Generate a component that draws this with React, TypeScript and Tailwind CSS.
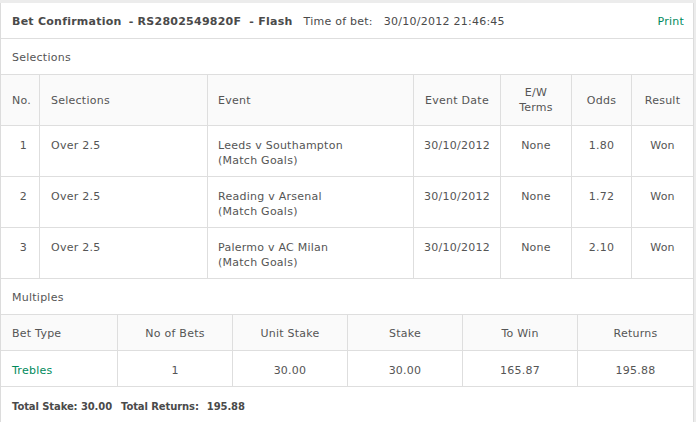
import React from "react";

type Sel = { no: number; selection: string; event: string; market: string; date: string; ew: string; odds: string; result: string };

const SELECTIONS: Sel[] = [
  { no: 1, selection: "Over 2.5", event: "Leeds v Southampton", market: "(Match Goals)", date: "30/10/2012", ew: "None", odds: "1.80", result: "Won" },
  { no: 2, selection: "Over 2.5", event: "Reading v Arsenal", market: "(Match Goals)", date: "30/10/2012", ew: "None", odds: "1.72", result: "Won" },
  { no: 3, selection: "Over 2.5", event: "Palermo v AC Milan", market: "(Match Goals)", date: "30/10/2012", ew: "None", odds: "2.10", result: "Won" },
];

const selCols = "grid grid-cols-[39px_168px_206px_87px_71px_60px_61px]";
const multiCols = "grid grid-cols-[117px_115px_115px_115px_115px_115px]";
const cell = "border-r border-[#dedede] last:border-r-0";

export default function App() {
  return (
    <div
      className="w-[696px] h-[422px] overflow-hidden bg-[#ececec] pt-[3px] text-[11px] leading-[15px] tracking-[0.25px] text-[#555]"
      style={{ fontFamily: '"DejaVu Sans", Verdana, sans-serif' }}
    >
      <div className="w-[694px] h-[440px] bg-white border-l border-r border-[#dcdcdc]">
        {/* Title */}
        <div className="h-[36px] flex items-center justify-between pt-[2px] pl-[11px] pr-[9px] border-b border-[#dedede]">
          <div className="flex items-center whitespace-pre text-[#4a4a4a]">
            <span className="font-bold">Bet Confirmation</span>
            <span className="font-bold ml-[7px]">- RS2802549820F</span>
            <span className="font-bold ml-[8px]">- Flash</span>
            <span className="ml-[11px]">Time of bet:</span>
            <span className="ml-[11px]">30/10/2012 21:46:45</span>
          </div>
          <span className="text-[#008a5c]">Print</span>
        </div>

        {/* Selections label */}
        <div className="h-[36px] flex items-center pt-[2px] pl-[11px] border-b border-[#dedede]">Selections</div>

        {/* Selections table */}
        <div className={`${selCols} h-[51px] bg-[#fafafa] border-b border-[#dedede]`}>
          <div className={`${cell} flex items-center pl-[11px]`}>No.</div>
          <div className={`${cell} flex items-center pl-[11px]`}>Selections</div>
          <div className={`${cell} flex items-center pl-[10px]`}>Event</div>
          <div className={`${cell} flex items-center justify-center`}>Event Date</div>
          <div className={`${cell} flex items-center justify-center text-center`}>
            E/W
            <br />
            Terms
          </div>
          <div className={`${cell} flex items-center justify-center`}>Odds</div>
          <div className={`${cell} flex items-center justify-center`}>Result</div>
        </div>
        {SELECTIONS.map((s) => (
          <div key={s.no} className={`${selCols} h-[51px] border-b border-[#dedede]`}>
            <div className={`${cell} pt-[12px] pr-[12px] text-right`}>{s.no}</div>
            <div className={`${cell} pt-[12px] pl-[11px]`}>{s.selection}</div>
            <div className={`${cell} pt-[12px] pl-[10px]`}>
              <div>{s.event}</div>
              <div>{s.market}</div>
            </div>
            <div className={`${cell} pt-[12px] text-center`}>{s.date}</div>
            <div className={`${cell} pt-[12px] text-center`}>{s.ew}</div>
            <div className={`${cell} pt-[12px] text-center`}>{s.odds}</div>
            <div className={`${cell} pt-[12px] text-center`}>{s.result}</div>
          </div>
        ))}

        {/* Multiples label */}
        <div className="h-[36px] flex items-center pt-[2px] pl-[11px] border-b border-[#dedede]">Multiples</div>

        <div className={`${multiCols} h-[36px] bg-[#fafafa] border-b border-[#dedede]`}>
          <div className={`${cell} flex items-center pt-[2px] pl-[11px]`}>Bet Type</div>
          {["No of Bets", "Unit Stake", "Stake", "To Win", "Returns"].map((h) => (
            <div key={h} className={`${cell} flex items-center justify-center pt-[2px]`}>
              {h}
            </div>
          ))}
        </div>
        <div className={`${multiCols} h-[36px] border-b border-[#dedede]`}>
          <div className={`${cell} flex items-center pt-[3px] pl-[11px] text-[#008a5c]`}>Trebles</div>
          {["1", "30.00", "30.00", "165.87", "195.88"].map((v, i) => (
            <div key={i} className={`${cell} flex items-center justify-center pt-[3px]`}>
              {v}
            </div>
          ))}
        </div>

        {/* Totals */}
        <div className="h-[36px] flex items-center pt-[2px] pl-[11px] font-bold text-[10px] tracking-[-0.1px] text-[#4a4a4a] whitespace-pre">
          <span>Total Stake: 30.00</span>
          <span className="ml-[9px]">Total Returns:</span>
          <span className="ml-[8px]">195.88</span>
        </div>
      </div>
    </div>
  );
}
